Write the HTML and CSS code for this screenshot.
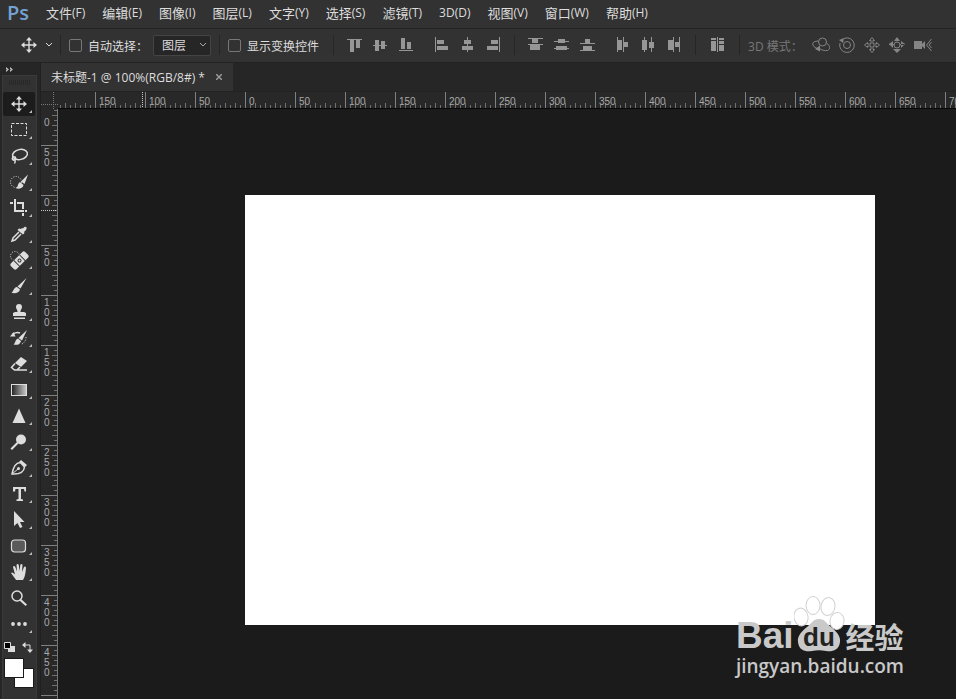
FILE: index.html
```html
<!DOCTYPE html>
<html lang="zh-CN">
<head>
    <meta charset="UTF-8">
    <meta name="viewport" content="width=device-width, initial-scale=1.0">
    <title>未标题-1</title>
    <link rel="stylesheet" href="styles.css">
</head>
<body>
    <header class="menubar">
        <span class="logo">Ps</span>
        <nav class="menu">
            <button>文件<span>(F)</span></button>
            <button>编辑<span>(E)</span></button>
            <button>图像<span>(I)</span></button>
            <button>图层<span>(L)</span></button>
            <button>文字<span>(Y)</span></button>
            <button>选择<span>(S)</span></button>
            <button>滤镜<span>(T)</span></button>
            <button><span>3D(D)</span></button>
            <button>视图<span>(V)</span></button>
            <button>窗口<span>(W)</span></button>
            <button>帮助<span>(H)</span></button>
        </nav>
    </header>

    <div class="options">
        <button class="current" aria-label="移动工具">
            <svg width="16" height="16" viewBox="0 0 16 16"><path d="M8 1v14M1 8h14" stroke="currentColor" stroke-width="1.4"/><path d="M8 0l3 3.5H5zM8 16l3-3.5H5zM0 8l3.5-3v6zM16 8l-3.5-3v6z"/></svg>
            <svg width="8" height="6" viewBox="0 0 8 6"><path class="line" d="M1 1l3 3 3-3"/></svg>
        </button>
        <span class="sep"></span>
        <label class="check"><input type="checkbox"><span>自动选择：</span></label>
        <select class="target" aria-label="自动选择"><option>图层</option></select>
        <span class="sep"></span>
        <label class="check"><input type="checkbox"><span>显示变换控件</span></label>
        <span class="sep"></span>
        <div class="group align">
            <button aria-label="顶对齐"><svg viewBox="0 0 16 16"><path d="M1 2h15v1H1zM4 3h4v12H4zM10 3h4v8h-4z"/></svg></button>
            <button aria-label="垂直居中对齐"><svg viewBox="0 0 16 16"><path d="M1 8h14v1H1zM3 3h4v11H3zM9 4h4v8H9z"/></svg></button>
            <button aria-label="底对齐"><svg viewBox="0 0 16 16"><path d="M1 13h14v1H1zM3 1h4v11H3zM9 5h4v7H9z"/></svg></button>
        </div>
        <div class="group">
            <button aria-label="左对齐"><svg viewBox="0 0 16 16"><path d="M2 0h1v15H2zM4 3h7v4H4zM4 9h11v4H4z"/></svg></button>
            <button aria-label="水平居中对齐"><svg viewBox="0 0 16 16"><path d="M8 0h1v15H8zM5 3h7v4H5zM3 9h11v4H3z"/></svg></button>
            <button aria-label="右对齐"><svg viewBox="0 0 16 16"><path d="M14 0h1v15h-1zM6 3h7v4H6zM2 9h11v4H2z"/></svg></button>
        </div>
        <span class="sep"></span>
        <div class="group distribute">
            <button aria-label="按顶分布"><svg viewBox="0 0 16 16"><path d="M1 1h15v1H1zM5 2h6v4H5zM1 7h15v1H1zM3 8h10v5H3z"/></svg></button>
            <button aria-label="垂直居中分布"><svg viewBox="0 0 16 16"><path d="M1 4h15v1H1zM5 2h7v4H5zM1 11h15v1H1zM3 9h11v4H3z"/></svg></button>
            <button aria-label="按底分布"><svg viewBox="0 0 16 16"><path d="M1 6h15v1H1zM6 2h5v4H6zM1 13h15v1H1zM4 9h9v4H4z"/></svg></button>
        </div>
        <div class="group">
            <button aria-label="按左分布"><svg viewBox="0 0 16 16"><path d="M3 0h1v15H3zM4 3h4v10H4zM9 0h1v15H9zM10 5h4v5h-4z"/></svg></button>
            <button aria-label="水平居中分布"><svg viewBox="0 0 16 16"><path d="M4 0h1v15H4zM2 3h5v10H2zM11 0h1v15h-1zM9 5h5v6H9z"/></svg></button>
            <button aria-label="按右分布"><svg viewBox="0 0 16 16"><path d="M7 0h1v15H7zM2 3h5v10H2zM13 0h1v15h-1zM9 5h4v5H9z"/></svg></button>
        </div>
        <span class="sep"></span>
        <div class="group auto">
            <button aria-label="自动对齐图层"><svg viewBox="0 0 16 16"><path d="M1 1h5v2H1zM1 4h5v10H1zM7 0h1v15H7zM9 1h5v2H9zM9 4h5v3H9zM9 8h5v6H9z"/></svg></button>
        </div>
        <span class="sep"></span>
        <div class="group mode">
            <span class="mode-label">3D 模式：</span>
            <button aria-label="旋转 3D 对象"><svg class="wide-icon" viewBox="0 0 18 16"><g class="line"><circle cx="10.500" cy="5" r="4"/><path d="M6.500 4C-1 4-1 9 5 11.500M14.500 6c4 3 4 6 1 7.500-3 .5-6-.5-8-2"/></g><path d="M3 12l5-3.500v6z"/></svg></button>
            <button aria-label="滚动 3D 对象"><svg viewBox="0 0 16 16"><g class="line"><circle cx="8" cy="8" r="3.500"/><path d="M5 1.500a7.300 7.300 0 1 1-4 4.500"/></g><path d="M0 3l5-2-1 5z"/></svg></button>
            <button aria-label="拖动 3D 对象"><svg viewBox="0 0 16 16"><path class="line" d="M8 .5l2.500 3H9v3.500h3.500V5.500L15.500 8l-3 2.500V9H9v3.500h1.500L8 15.500l-2.500-3H7V9H3.500v1.500L.5 8l3-2.500V7H7V3.500H5.500z"/></svg></button>
            <button aria-label="滑动 3D 对象"><svg viewBox="0 0 16 16"><circle class="line" cx="8" cy="8" r="3"/><path d="M8 0l3 4H5zM8 16l4-4H4zM0 7l4-3v7zM16 7l-4-3v7zM0 7h5v1H0zM11 7h5v1h-5z"/></svg></button>
            <button aria-label="缩放 3D 对象"><svg class="wide-icon" viewBox="0 0 18 16"><path d="M0 4h8v8H0zM7 8l4-4v8z"/><path class="line" d="M17.500 2l-5 6 5 6M17.500 5L15 8l2.500 3"/></svg></button>
        </div>
    </div>

    <div class="main">
        <aside class="toolbox">
            <button class="expand" aria-label="展开面板"><svg width="8" height="5" viewBox="0 0 8 5"><path d="M0 0l3 2.500L0 5V3l1-.5L0 2zM4 0l3 2.500L4 5V3l1-.5L4 2z"/></svg></button>
            <div class="panel">
                <div class="grip"></div>
                <div class="tools">
                    <button class="tool active" aria-label="移动"><svg viewBox="0 0 20 20"><path d="M9.300 4h1.400v12H9.300zM4 9.300h12v1.400H4z"/><path d="M10 2l3 3.500H7zM10 18l3-3.500H7zM2 10l3.500-3v6zM18 10l-3.500-3v6z"/></svg></button>
                    <button class="tool" aria-label="矩形选框"><svg viewBox="0 0 20 20"><rect class="line" x="2.500" y="3.500" width="15" height="12" stroke-dasharray="3 1.500"/></svg></button>
                    <button class="tool" aria-label="套索"><svg viewBox="0 0 20 20"><g class="line wide"><ellipse cx="11" cy="8.500" rx="7.500" ry="5" transform="rotate(-12 11 8.500)"/><circle cx="5" cy="12.500" r="1.700"/><path d="M4.500 13c2 1 2 2.500 1 4.500"/></g></svg></button>
                    <button class="tool" aria-label="快速选择"><svg viewBox="0 0 20 20"><circle class="line" cx="7" cy="10" r="5.500" stroke-dasharray="1 1.500"/><path d="M19 2.500L15.500 12l-3.500-2.500zM11 10l3.500 3c-.5 3.500-4 4-7.500 3.500 2-1 1.500-5 4-6.500z"/></svg></button>
                    <button class="tool" aria-label="裁剪"><svg viewBox="0 0 20 20"><path d="M5 1h2v11h8v2H5zM1 4h3v2H1zM8 4h7v7h-2V6H8zM13 15h2v3h-2zM16 12h2v2h-2z"/></svg></button>
                    <button class="tool" aria-label="吸管"><svg viewBox="0 0 20 20"><path d="M12 5l1-1 1 .5C16 1 19 3 17 6l-2 2 .5 1-1.500 1.500L8.500 6 10 4.500z"/><path class="line wide" d="M10 8l-6 6-1 3 3-1 6-6"/></svg></button>
                    <button class="tool" aria-label="污点修复画笔"><svg viewBox="0 0 20 20"><circle class="line" cx="6" cy="6" r="4.500" stroke-dasharray="1 1.500"/><g transform="rotate(-45 10.500 10.500)"><rect x="0.500" y="6.500" width="20" height="8" rx="2"/><path class="cut" d="M6.500 6v9M14.500 6v9"/><circle class="cut" cx="10.500" cy="10.500" r="1.500"/></g></svg></button>
                    <button class="tool" aria-label="画笔"><svg viewBox="0 0 20 20"><path d="M17.500 2L11.500 12.500 8.500 10.500zM8 11l3 2.500c-1 3.500-4 4-8.500 3.500 2-1.500 2-5.500 5.500-6z"/></svg></button>
                    <button class="tool" aria-label="仿制图章"><svg viewBox="0 0 20 20"><path d="M10 2a3 3 0 0 1 3 3c0 2-1.500 2-1.500 5H15l2 1v3H4v-3l2-1h2.500c0-3-1.500-3-1.500-5a3 3 0 0 1 3-3zM5 15.500h11v1.500H5z"/></svg></button>
                    <button class="tool" aria-label="历史记录画笔"><svg viewBox="0 0 20 20"><path d="M18 2l-5 10.500-3.500-2.500zM9 10.500l3 2.500c-1 3.500-3.500 4.500-7.500 3.500 2-1 1.500-5 4.500-6zM1 8.500L4.500 4 6.500 8.500z"/><path class="line wide" d="M4 6c3-2 5-2 7-1"/><path class="line" d="M17 9c0 4-2 6-5 7.500" stroke-dasharray="1 1.500"/></svg></button>
                    <button class="tool" aria-label="橡皮擦"><svg viewBox="0 0 20 20"><path d="M12 3l6 4-6 6-6-4z"/><path class="line wide" d="M6 9.500l-3.500 4 3 2.500H8l3-3M8 16h10"/></svg></button>
                    <button class="tool" aria-label="渐变"><svg viewBox="0 0 20 20"><defs><linearGradient id="fade"><stop offset="0" stop-color="#222"/><stop offset="1" stop-color="#ccc"/></linearGradient></defs><rect x="2.500" y="4.500" width="15" height="11" fill="url(#fade)" stroke="#ddd"/></svg></button>
                    <button class="tool" aria-label="锐化"><svg viewBox="0 0 20 20"><path d="M10 2.500L16.500 17h-13z"/></svg></button>
                    <button class="tool" aria-label="减淡"><svg viewBox="0 0 20 20"><circle cx="12" cy="7.500" r="5"/><path d="M8 10l1.500 1.500L3 18l-1.500-1.500z"/></svg></button>
                    <button class="tool" aria-label="钢笔"><svg viewBox="0 0 20 20"><g class="line"><path class="wide" d="M11.500 4.500c-5 .5-7 4-8.500 11.500 8 .5 12-2 12.500-7z"/><path d="M3 16l6-5"/></g><path d="M12 2l6 5-2 2-6-5z"/><circle cx="9.500" cy="10.500" r="1.500"/></svg></button>
                    <button class="tool" aria-label="文字"><svg viewBox="0 0 20 20"><path d="M4 3h13v4.500h-1.500L15 5h-3v10l2 .5V17H7.500v-1.500L9.500 15V5h-3L6 7.500H4z"/></svg></button>
                    <button class="tool" aria-label="路径选择"><svg viewBox="0 0 20 20"><path d="M5 1l10.500 11H11l2.500 5-2.500 1-2.500-5L5 16z"/></svg></button>
                    <button class="tool" aria-label="圆角矩形"><svg viewBox="0 0 20 20"><rect x="2.500" y="4" width="14" height="12" rx="3" fill="#5a5a5a" stroke="#ddd" stroke-width="1.200"/></svg></button>
                    <button class="tool" aria-label="抓手"><svg viewBox="0 0 20 20"><path d="M7 18c-1-2-3-4-5-7 1-1.500 2.500 0 4 1.500L4 5c.5-1.500 2-1 2.300 0L8 9.500 7.500 3c.3-1.500 2-1.500 2.300 0l.7 6 .8-6c.5-1.500 2-1 2.200 0L13 10l2-5c.7-1.200 2-.5 2 1-.5 4-.5 8-3 12z"/></svg></button>
                    <button class="tool plain" aria-label="缩放"><svg viewBox="0 0 20 20"><circle class="line wide" cx="8" cy="8" r="5"/><path d="M12 11l6 5.500-1.500 1.500-6-5.500z"/></svg></button>
                    <button class="tool" aria-label="编辑工具栏"><svg viewBox="0 0 20 20"><circle cx="4" cy="10" r="1.900"/><circle cx="10" cy="10" r="1.900"/><circle cx="16" cy="10" r="1.900"/></svg></button>
                </div>
                <div class="colors">
                    <button aria-label="默认颜色"><svg width="11" height="11" viewBox="0 0 11 11"><path d="M4 4h7v6H4z"/><path d="M.5 .5h6v6h-6z" fill="#000" stroke="#ddd"/></svg></button>
                    <button aria-label="切换颜色"><svg width="12" height="11" viewBox="0 0 12 11"><path class="line" d="M2 3h6v6"/><path d="M0 3l3.500-3v6zM8 11L5 7.500h6z"/></svg></button>
                </div>
                <div class="swatches">
                    <button class="swatch back" aria-label="背景色"></button>
                    <button class="swatch" aria-label="前景色"></button>
                </div>
            </div>
        </aside>

        <main class="document">
            <div class="tabs">
                <div class="tab">
                    <span>未标题-1 @ 100%(RGB/8#) *</span>
                    <button aria-label="关闭"><svg width="6" height="6" viewBox="0 0 6 6"><path d="M0 0l6 6M6 0L0 6" stroke="currentColor" stroke-width="1.500"/></svg></button>
                </div>
            </div>
            <div class="sheet">
                <div class="corner"></div>
                <div class="ruler-x">
                    <span class="first"></span><span>150</span><span>100</span><span>50</span><span>0</span><span>50</span><span>100</span><span>150</span><span>200</span><span>250</span><span>300</span><span>350</span><span>400</span><span>450</span><span>500</span><span>550</span><span>600</span><span>650</span><span>700</span>
                    <i class="mark"></i>
                </div>
                <div class="ruler-y">
                    <span class="first">0</span><span>50</span><span>0</span><span>50</span><span>100</span><span>150</span><span>200</span><span>250</span><span>300</span><span>350</span><span>400</span><span>450</span><span></span>
                    <i class="mark"></i>
                </div>
                <div class="workspace">
                    <div class="canvas"></div>
                    <div class="watermark">
                        <div class="brand">
                            <span>Bai</span>
                            <svg width="52" height="56" viewBox="0 0 52 56">
                                <g class="toes"><ellipse cx="7" cy="21" rx="7" ry="9" transform="rotate(-10 7 21)"/><ellipse cx="19" cy="9.500" rx="7" ry="9"/><ellipse cx="34" cy="10.500" rx="7" ry="9" transform="rotate(10 34 10.500)"/><ellipse cx="43" cy="25" rx="7" ry="8.500" transform="rotate(10 43 25)"/></g>
                                <path d="M25 23c6 0 8 5 12 8 5 4 10 9 9 15-1 9-9 10-14 9-5-1-9-1-14 0-6 1-13 0-14-9-1-6 4-11 9-15 4-3 6-8 12-8z"/>
                                <text x="25" y="50">du</text>
                            </svg>
                            <span class="cn">经验</span>
                        </div>
                        <div class="site">jingyan.baidu.com</div>
                    </div>
                </div>
            </div>
        </main>
    </div>
</body>
</html>
```

FILE: styles.css
```css
* {
    box-sizing: border-box;
}

body {
    display: flex;
    flex-direction: column;
    height: 100vh;
    margin: 0;
    overflow: hidden;
    background-color: #262626;
    color: #ddd;
    font-family: "Open Sans", "Noto Sans CJK SC", sans-serif;
    font-size: 12px;
}

button {
    display: flex;
    align-items: center;
    padding: 0;
    border: none;
    background: none;
    color: inherit;
    font: inherit;
}

svg {
    display: block;
    fill: currentColor;
}

.line {
    fill: none;
    stroke: currentColor;
}

.wide {
    stroke-width: 1.5;
}

.cut {
    fill: none;
    stroke: #323232;
}

/* menu */
.menubar {
    display: flex;
    align-items: center;
    flex: none;
    height: 29px;
    padding-left: 7px;
    border-bottom: 1px solid #232323;
    background-color: #323232;
}

.logo {
    width: 39px;
    padding-bottom: 3px;
    color: #74a3d3;
    font-size: 20px;
    font-weight: 600;
    line-height: 24px;
}

.menu {
    display: flex;
    gap: 17px;
    padding-bottom: 3px;
    font-size: 13px;
    white-space: nowrap;
}

.menu span {
    font-size: 12px;
}

/* options bar */
.options {
    display: flex;
    align-items: center;
    flex: none;
    height: 34px;
    padding-bottom: 1px;
    border-bottom: 1px solid #222;
    background-color: #323232;
    white-space: nowrap;
}

.current {
    gap: 8px;
    margin: 0 7px 0 21px;
}

.sep {
    flex: none;
    width: 1px;
    height: 20px;
    background-color: #262626;
}

.check {
    display: flex;
    align-items: center;
    gap: 6px;
    margin-left: 8px;
}

.check input {
    appearance: none;
    width: 13px;
    height: 13px;
    margin: 0;
    border: 1px solid #777;
    border-radius: 2px;
}

.check span {
    padding-top: 2px;
}

.target {
    appearance: none;
    width: 58px;
    height: 21px;
    margin: 0 8px 0 5px;
    padding: 0 8px;
    border: 1px solid #444;
    border-radius: 2px;
    background: #262626 url("data:image/svg+xml,%3Csvg xmlns='http://www.w3.org/2000/svg' width='8' height='6'%3E%3Cpath d='M1 1l3 3 3-3' fill='none' stroke='%23aaa'/%3E%3C/svg%3E") no-repeat right 3px center;
    color: #ddd;
    font: inherit;
}

.check + .sep {
    margin-left: 14px;
}

.group {
    display: flex;
    align-items: center;
    gap: 10px;
    margin: 0 13px 0 12px;
    color: #969696;
}

.group svg {
    width: 16px;
    height: 16px;
}

.align,
.distribute {
    margin-right: 7px;
}

.auto {
    margin-left: 14px;
}

.mode {
    gap: 9px;
    margin: 0 8px;
    color: #858585;
}

.mode .wide-icon {
    width: 18px;
}

.mode-label {
    padding-top: 2px;
    color: #777;
}

/* toolbox */
.main {
    display: flex;
    flex: 1;
    min-height: 0;
}

.toolbox {
    flex: none;
    width: 41px;
    padding: 0 3px 0 2px;
    border-right: 1px solid #202020;
}

.expand {
    height: 12px;
    padding-left: 4px;
    color: #bbb;
}

.panel {
    height: 100%;
    border: 1px solid #3a3a3a;
    background-color: #323232;
}

.grip {
    height: 5px;
    margin: 4px 6px 7px;
    background: repeating-linear-gradient(90deg, #282828 0 1px, #323232 1px 2px);
}

.tools {
    display: flex;
    flex-direction: column;
    gap: 2px;
}

.tool {
    position: relative;
    justify-content: center;
    width: 32px;
    height: 24px;
}

.tool.active {
    border-radius: 2px;
    background-color: #1c1c1c;
}

.tool svg {
    width: 20px;
    height: 20px;
}

.tool::after {
    content: "";
    position: absolute;
    right: 3px;
    bottom: 3px;
    border-bottom: 3px solid #bbb;
    border-left: 3px solid transparent;
}

.tool.plain::after {
    display: none;
}

.colors {
    display: flex;
    gap: 7px;
    padding: 6px 1px 5px;
}

.swatches {
    position: relative;
    width: 31px;
    height: 31px;
    margin-left: 1px;
}

.swatch {
    position: absolute;
    top: 0;
    left: 0;
    width: 20px;
    height: 20px;
    border: 1px solid #1a1a1a;
    background-color: #fff;
}

.swatch.back {
    top: 10px;
    left: 10px;
}

/* document window */
.document {
    display: flex;
    flex-direction: column;
    flex: 1;
    min-width: 0;
}

.tabs {
    display: flex;
    height: 29px;
    border-bottom: 1px solid #222;
}

.tab {
    display: flex;
    align-items: center;
    gap: 11px;
    padding: 0 11px 0 10px;
    background-color: #323232;
    white-space: nowrap;
}

.tab button {
    color: #999;
}

.sheet {
    display: grid;
    grid-template-columns: 17px 1fr;
    grid-template-rows: 17px 1fr;
    flex: 1;
    min-height: 0;
}

.corner {
    background:
        repeating-linear-gradient(#777 0 1px, transparent 1px 2px) 12px 0 / 1px 100% no-repeat,
        repeating-linear-gradient(90deg, #777 0 1px, transparent 1px 2px) 0 12px / 100% 1px no-repeat,
        #282828;
}

.ruler-x,
.ruler-y {
    position: relative;
    display: flex;
    overflow: hidden;
    background-color: #282828;
    color: #a8a8a8;
    font-family: "Liberation Sans", sans-serif;
    font-size: 10px;
    line-height: 10px;
}

.ruler-x {
    border-bottom: 1px solid #080808;
}

.ruler-y {
    flex-direction: column;
    border-right: 1px solid #777;
}

/* ticks every 5px, the tens a little longer */
.ruler-x span {
    flex: none;
    width: 50px;
    padding: 5px 0 0 4px;
    background:
        linear-gradient(#808080, #808080) 0 0 / 1px 100% no-repeat,
        repeating-linear-gradient(90deg, #707070 0 1px, transparent 1px 10px) right bottom / 50px 5px no-repeat,
        repeating-linear-gradient(90deg, #707070 0 1px, transparent 1px 5px) right bottom / 50px 3px no-repeat;
}

.ruler-y span {
    flex: none;
    width: 16px;
    height: 50px;
    padding: 3px 8px 0 3px;
    background:
        linear-gradient(#808080, #808080) 0 0 / 100% 1px no-repeat,
        repeating-linear-gradient(#707070 0 1px, transparent 1px 10px) right bottom / 5px 50px no-repeat,
        repeating-linear-gradient(#707070 0 1px, transparent 1px 5px) right bottom / 3px 50px no-repeat;
    word-break: break-all;
}

.ruler-x .first {
    width: 37px;
    background-size: 0 0, 50px 5px, 50px 3px;
}

.ruler-y .first {
    height: 36px;
    padding-top: 9px;
    background-size: 0 0, 5px 50px, 3px 50px;
}

.mark {
    position: absolute;
}

.ruler-x .mark {
    top: 0;
    left: 84px;
    width: 1px;
    height: 100%;
    background: repeating-linear-gradient(#ccc 0 1px, transparent 1px 2px);
}

.ruler-y .mark {
    top: 101px;
    left: 0;
    width: 100%;
    height: 1px;
    background: repeating-linear-gradient(90deg, #ccc 0 1px, transparent 1px 2px);
}

.workspace {
    position: relative;
    overflow: hidden;
    background-color: #1b1b1b;
}

.canvas {
    width: 630px;
    height: 430px;
    margin: 86px 0 0 187px;
    background-color: #fff;
}

.watermark {
    position: absolute;
    right: 52px;
    bottom: 20px;
    color: #c9c9c9;
}

.brand {
    display: flex;
    align-items: flex-end;
    height: 58px;
    padding-bottom: 1px;
    font-family: "Liberation Sans", sans-serif;
    font-size: 37px;
    font-weight: bold;
    line-height: 32px;
}

.brand .cn {
    font-family: "Noto Sans CJK SC", sans-serif;
    font-size: 29px;
}

.brand text {
    fill: #222;
    font-size: 26px;
    text-anchor: middle;
}

.toes {
    fill: #fff;
    stroke: #d0d0d0;
}

.site {
    font-size: 19px;
    font-weight: 600;
    line-height: 26px;
}
```
